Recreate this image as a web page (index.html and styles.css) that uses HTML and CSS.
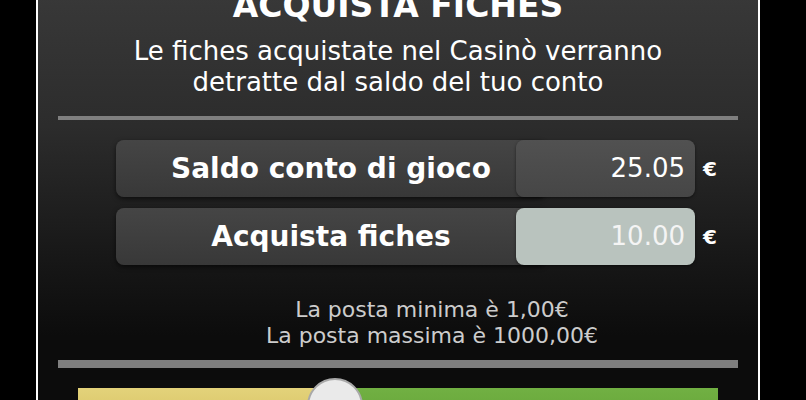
FILE: index.html
```html
<!DOCTYPE html>
<html lang="it">
<head>
    <meta charset="UTF-8">
    <meta name="viewport" content="width=device-width, initial-scale=1.0">
    <title>Acquista fiches</title>
    <link rel="stylesheet" href="styles.css">
</head>
<body>

<div class="panel">
    <h1 class="title">ACQUISTA FICHES</h1>
    <p class="intro">Le fiches acquistate nel Casinò verranno<br>detratte dal saldo del tuo conto</p>

    <div class="sep"></div>

    <div class="rows">
        <div class="row">
            <div class="label">Saldo conto di gioco</div>
            <div class="value">25.05</div>
            <span class="euro">€</span>
        </div>
        <div class="row">
            <div class="label">Acquista fiches</div>
            <div class="value input">10.00</div>
            <span class="euro">€</span>
        </div>
    </div>

    <p class="limits">La posta minima è 1,00€<br>La posta massima è 1000,00€</p>

    <div class="sep thick"></div>

    <div class="slider">
        <div class="fill"></div>
        <div class="rest"></div>
        <div class="knob"></div>
    </div>
</div>

</body>
</html>
```

FILE: styles.css
```css
html,
body{
    margin:0;
    background:#000;
    height:400px;
    overflow:hidden;
    font-family:'DejaVu Sans', Verdana, sans-serif;
}

.panel{
    margin:-14px 0 0 36px;
    width:720px;
    height:414px;
    overflow:hidden;
    border:2px solid #fff;
    border-top:none;
    border-bottom:none;
    background:linear-gradient(to bottom, #393939 0px, #2c2c2c 140px, #161616 280px, #0c0c0c 350px);
    color:#fff;
    text-align:center;
}

.title{
    margin:0;
    font-size:33px;
    line-height:40px;
    font-weight:bold;
}

.intro{
    margin:10px 0 0;
    font-size:26px;
    line-height:31px;
}

.sep{
    margin:18px 20px 0;
    height:4px;
    background:#7f7f7f;
}
.sep.thick{
    margin-top:11px;
    height:8px;
}

/* righe saldo / acquisto */
.rows{
    margin:20px 0 0 78px;
    display:flex;
    flex-direction:column;
    gap:11px;
}
.row{
    display:flex;
    align-items:center;
    height:57px;
}
.label{
    width:430px;
    height:57px;
    margin-right:-30px;
    border-radius:8px;
    background:linear-gradient(to bottom, #454545, #383838);
    box-shadow:0 2px 5px rgba(0,0,0,0.6);
    font-size:28px;
    font-weight:bold;
    line-height:57px;
    text-align:center;
}
.value{
    position:relative;
    width:169px;
    height:57px;
    padding-right:10px;
    border-radius:8px;
    background:linear-gradient(to bottom, #515151, #464646);
    box-shadow:0 1px 3px rgba(0,0,0,0.5);
    font-size:26px;
    line-height:57px;
    text-align:right;
}
.value.input{
    background:#b9c3be;
    color:#f4f4f4;
}
.euro{
    margin-left:8px;
    font-size:20px;
    font-weight:bold;
}

.limits{
    margin:32px 0 0;
    padding-left:68px;
    color:#cccccc;
    font-size:22px;
    line-height:26px;
}

/* cursore */
.slider{
    position:relative;
    display:flex;
    margin:20px 40px 0;
    height:40px;
}
.fill{
    width:257px;
    background:linear-gradient(to bottom, #e3d27a, #d6c262);
}
.rest{
    flex:1;
    background:linear-gradient(to bottom, #71b043, #64a335);
}
.knob{
    position:absolute;
    left:229px;
    top:-10px;
    width:52px;
    height:52px;
    border:2px solid #a9a9a9;
    border-radius:50%;
    background:#eaeaea;
}
```
